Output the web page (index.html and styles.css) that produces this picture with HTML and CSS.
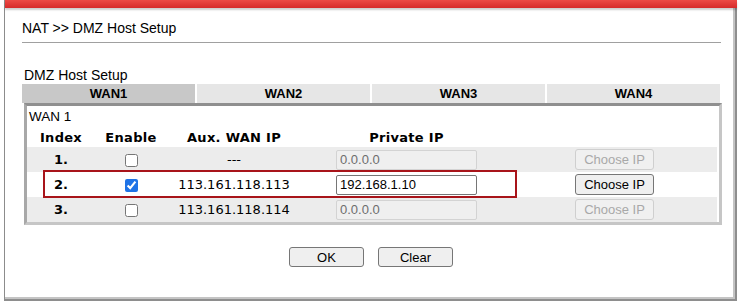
FILE: index.html
```html
<!DOCTYPE html>
<html lang="en">
<head>
  <meta charset="UTF-8">
  <meta name="viewport" content="width=device-width, initial-scale=1.0">
  <title>NAT &gt;&gt; DMZ Host Setup</title>
  <link rel="stylesheet" href="styles.css">
</head>
<body>
  <div class="frame">
    <div class="top-bar"></div>
    <div class="page">
      <h1 class="page-title">NAT &gt;&gt; DMZ Host Setup</h1>
      <div class="section-label">DMZ Host Setup</div>

      <div class="tabs">
        <div class="tab active">WAN1</div>
        <div class="tab">WAN2</div>
        <div class="tab">WAN3</div>
        <div class="tab">WAN4</div>
      </div>

      <div class="wan-box">
        <div class="wan-name">WAN 1</div>
        <table class="dmz-table">
          <colgroup>
            <col class="col-index">
            <col class="col-enable">
            <col class="col-aux">
            <col class="col-private">
            <col class="col-choose">
          </colgroup>
          <thead>
            <tr>
              <th>Index</th>
              <th>Enable</th>
              <th>Aux. WAN IP</th>
              <th>Private IP</th>
              <th></th>
            </tr>
          </thead>
          <tbody>
            <tr class="shade">
              <td class="idx">1.</td>
              <td><input type="checkbox" class="check"></td>
              <td class="aux">---</td>
              <td><input type="text" class="ip-input" value="0.0.0.0" disabled></td>
              <td><button class="choose" disabled>Choose IP</button></td>
            </tr>
            <tr>
              <td class="idx">2.</td>
              <td><input type="checkbox" class="check" checked></td>
              <td class="aux">113.161.118.113</td>
              <td><input type="text" class="ip-input" value="192.168.1.10"></td>
              <td><button class="choose">Choose IP</button></td>
            </tr>
            <tr class="shade">
              <td class="idx">3.</td>
              <td><input type="checkbox" class="check"></td>
              <td class="aux">113.161.118.114</td>
              <td><input type="text" class="ip-input" value="0.0.0.0" disabled></td>
              <td><button class="choose" disabled>Choose IP</button></td>
            </tr>
          </tbody>
        </table>
        <!-- marca roja sobre la fila 2 -->
        <div class="highlight"></div>
      </div>

      <div class="actions">
        <button class="btn">OK</button>
        <button class="btn">Clear</button>
      </div>
    </div>
  </div>
</body>
</html>
```

FILE: styles.css
```css
* {
  box-sizing: border-box;
}
body {
  margin: 0;
  background-color: #fff;
  font-family: "Liberation Sans", Arial, sans-serif;
  font-size: 13px;
  color: #000;
}
.frame {
  margin-left: 4px;
  width: 733px;
  height: 301px;
  border-left: 1px solid #8c8c8c;
  box-shadow: inset -2px -2px 0 #8e8e8e, inset -4px -4px 0 #c4c4c4;
}
.top-bar {
  height: 8px;
  background: linear-gradient(#ec4a45, #d62a2a);
  box-shadow: 0 2px 2px rgba(0, 0, 0, 0.2);
}
.page {
  padding: 12px 17px 0 17px;
}
.page-title {
  margin: 0;
  width: 699px;
  font-size: 14px;
  font-weight: normal;
  line-height: 16px;
  padding-bottom: 6px;
  border-bottom: 1px solid #a0a0a0;
}
.section-label {
  margin-top: 24px;
  margin-left: 2px;
  font-size: 14px;
  line-height: 16px;
}
.tabs {
  display: grid;
  grid-template-columns: repeat(4, 1fr);
  gap: 2px;
  width: 698px;
  margin-top: 1px;
}
.tab {
  height: 19px;
  line-height: 19px;
  text-align: center;
  font-weight: bold;
  background-color: #e6e6e6;
}
.tab.active {
  background-color: #c8c8c8;
}
.wan-box {
  position: relative;
  width: 698px;
  margin-left: 2px;
  border-style: solid;
  border-width: 3px;
  border-color: #8f8f8f #c6c6c6 #c6c6c6 #a8a8a8;
  padding-top: 1px;
}
.wan-name {
  height: 20px;
  line-height: 20px;
  padding-left: 2px;
  font-size: 13.5px;
}
.dmz-table {
  width: 690px;
  border-collapse: collapse;
  border-spacing: 0;
  table-layout: fixed;
}
.col-index { width: 68px; }
.col-enable { width: 72px; }
.col-aux { width: 134px; }
.col-private { width: 211px; }
.col-choose { width: 205px; }
th {
  height: 20px;
  padding: 0;
  font-family: "DejaVu Sans", Verdana, sans-serif;
  font-size: 13px;
  font-weight: bold;
  letter-spacing: 0.3px;
  text-align: center;
}
td {
  height: 25px;
  padding: 0;
  text-align: center;
  vertical-align: middle;
}
tr.shade td {
  background-color: #ececec;
}
.idx {
  font-family: "DejaVu Sans", Verdana, sans-serif;
  font-weight: bold;
}
.aux {
  font-family: "DejaVu Sans", Verdana, sans-serif;
}
.check {
  width: 13px;
  height: 13px;
  margin: 0;
  vertical-align: middle;
  accent-color: #1f73e6;
}
.ip-input {
  width: 141px;
  height: 20px;
  padding: 0 3px;
  font-family: "Liberation Sans", Arial, sans-serif;
  font-size: 13px;
  color: #000;
  background-color: #fff;
  border: 1px solid #767676;
  border-radius: 2px;
  vertical-align: middle;
}
.ip-input:disabled {
  color: #6d6d6d;
  background-color: #efefef;
  border-color: #d3d3d3;
}
.choose,
.btn {
  padding: 0;
  font-family: "Liberation Sans", Arial, sans-serif;
  font-size: 13px;
  color: #000;
  background-color: #efefef;
  border: 1px solid #767676;
  border-radius: 3px;
}
.choose {
  width: 79px;
  height: 21px;
  vertical-align: middle;
}
.choose:disabled {
  color: #a8a8a8;
  background-color: #f0f0f0;
  border-color: #cfcfcf;
}
.btn {
  width: 75px;
  height: 20px;
}
.highlight {
  position: absolute;
  left: 16px;
  top: 64px;
  width: 474px;
  height: 28px;
  border: 2px solid #a8141a;
  pointer-events: none;
}
.actions {
  display: flex;
  justify-content: center;
  gap: 14px;
  margin-top: 22px;
}
```
